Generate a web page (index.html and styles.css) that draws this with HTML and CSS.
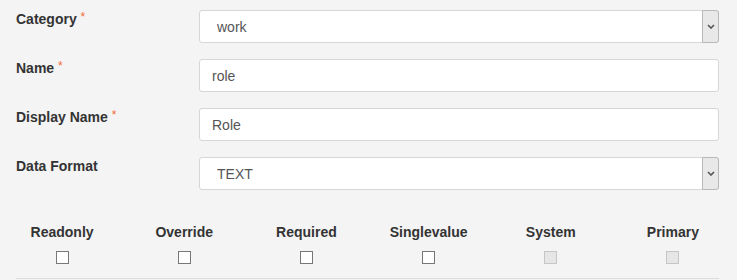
FILE: index.html
```html
<!DOCTYPE html>
<html lang="en">
<head>
  <meta charset="UTF-8" />
  <meta name="viewport" content="width=device-width, initial-scale=1.0" />
  <title>Attribute</title>
  <link rel="stylesheet" href="styles.css">
</head>
<body>
  <form class="attr-form">
    <div class="form-row">
      <label class="form-label">Category <span class="req">*</span></label>
      <div class="select-box">
        <select name="category"><option>work</option></select>
        <span class="caret"><svg width="8" height="5" viewBox="0 0 8 5"><path d="M1 1l3 3 3-3" fill="none" stroke="#555" stroke-width="1.6"/></svg></span>
      </div>
    </div>
    <div class="form-row">
      <label class="form-label">Name <span class="req">*</span></label>
      <input type="text" class="text-input" name="name" value="role" />
    </div>
    <div class="form-row">
      <label class="form-label">Display Name <span class="req">*</span></label>
      <input type="text" class="text-input" name="displayName" value="Role" />
    </div>
    <div class="form-row">
      <label class="form-label">Data Format</label>
      <div class="select-box">
        <select name="format"><option>TEXT</option></select>
        <span class="caret"><svg width="8" height="5" viewBox="0 0 8 5"><path d="M1 1l3 3 3-3" fill="none" stroke="#555" stroke-width="1.6"/></svg></span>
      </div>
    </div>

    <div class="flags">
      <div class="flag"><span class="flag-label">Readonly</span><input type="checkbox" /></div>
      <div class="flag"><span class="flag-label">Override</span><input type="checkbox" /></div>
      <div class="flag"><span class="flag-label">Required</span><input type="checkbox" /></div>
      <div class="flag"><span class="flag-label">Singlevalue</span><input type="checkbox" /></div>
      <div class="flag"><span class="flag-label">System</span><input type="checkbox" disabled /></div>
      <div class="flag"><span class="flag-label">Primary</span><input type="checkbox" disabled /></div>
    </div>
    <div class="divider"></div>
  </form>
</body>
</html>
```

FILE: styles.css
```css
body {
  margin: 0;
  background: #f4f4f4;
  font-family: 'Liberation Sans', Arial, sans-serif;
  font-size: 14px;
  color: #333;
}
.attr-form {
  padding-top: 10px;
}
.form-row {
  display: grid;
  grid-template-columns: 183px 1fr;
  padding: 0 18px 0 16px;
  margin-bottom: 16px;
}
.form-row:last-of-type {
  margin-bottom: 0;
}
.form-label {
  font-weight: bold;
  line-height: 18px;
  color: #333;
}
.req {
  font-weight: normal;
  font-size: 12px;
  vertical-align: top;
  line-height: 14px;
  color: #f26b3a;
}
.text-input, .select-box {
  box-sizing: border-box;
  height: 33px;
  border: 1px solid #d6d6d6;
  border-radius: 3px;
  background: #fff;
}
.text-input {
  width: 100%;
  padding: 0 12px;
  font-family: inherit;
  font-size: 14px;
  color: #555;
  outline: none;
}
.select-box {
  display: flex;
}
.select-box select {
  flex: 1;
  appearance: none;
  border: none;
  background: transparent;
  padding: 0 0 0 17px;
  font-family: inherit;
  font-size: 14px;
  color: #555;
  outline: none;
}
.caret {
  width: 15px;
  margin: -1px -1px -1px 0;
  border: 1px solid #b8b8b8;
  border-radius: 0 3px 3px 0;
  background: #e8e8e8;
  display: flex;
  align-items: center;
  justify-content: center;
}
.flags {
  display: grid;
  grid-template-columns: repeat(6, 1fr);
  padding: 0 3px 0 1px;
  margin-top: 32px;
}
.flag {
  display: flex;
  flex-direction: column;
  align-items: center;
}
.flag-label {
  font-weight: bold;
  line-height: 20px;
}
.flag input {
  appearance: none;
  width: 13px;
  height: 13px;
  margin: 9px 0 0;
  border: 1px solid #777;
  background: #fff;
}
.flag input:disabled {
  border-color: #c6c6c6;
  background: #e6e6e6;
}
.divider {
  margin: 14px 18px 0 16px;
  border-top: 1px solid #dcdcdc;
}
```
